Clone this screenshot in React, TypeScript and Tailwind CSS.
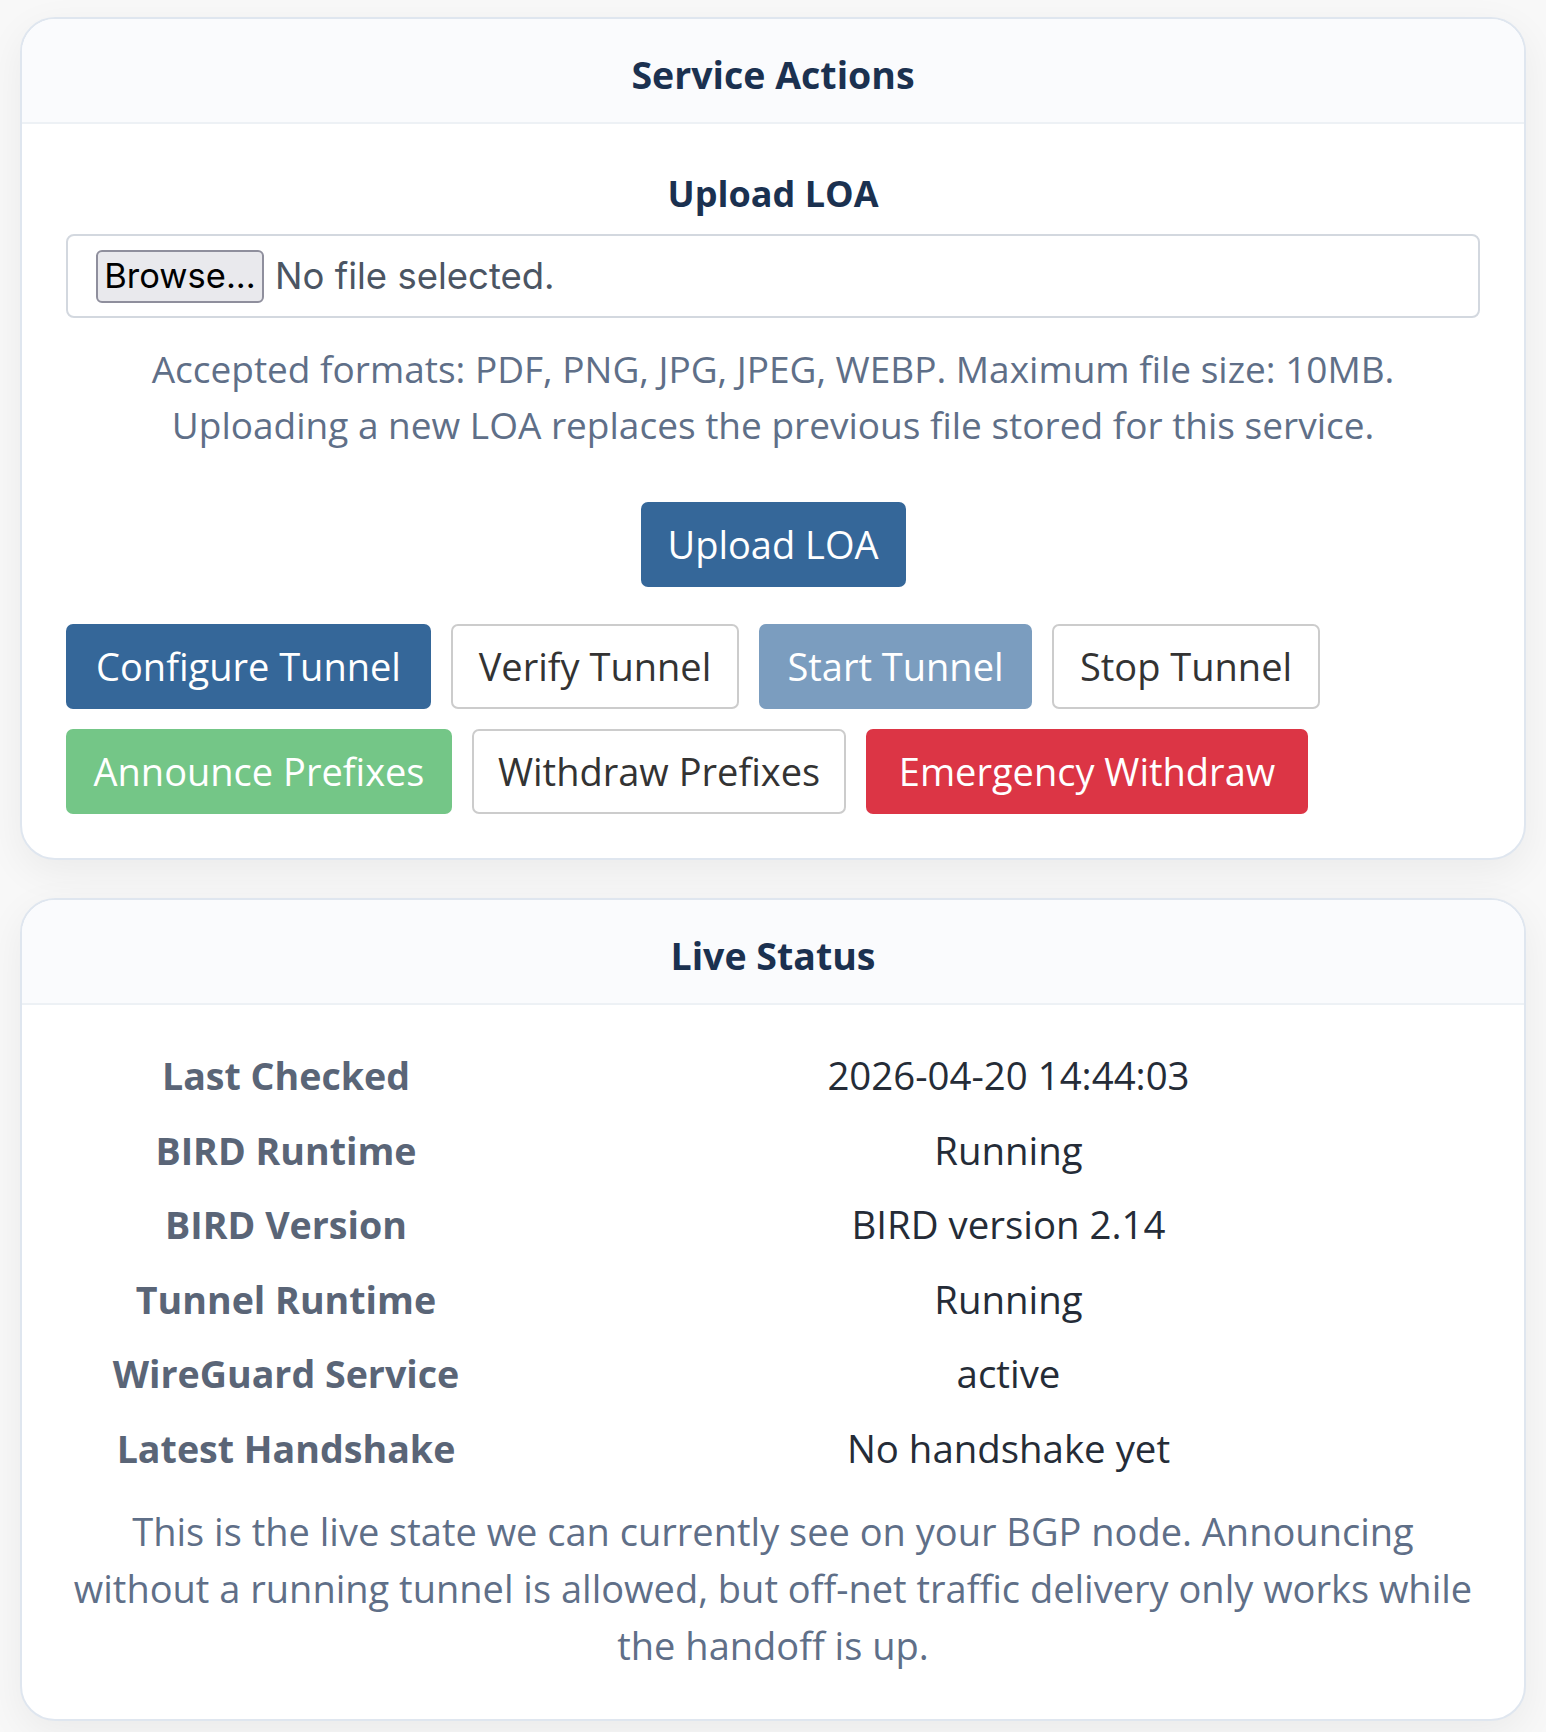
import React from "react";

type Btn = {
    label: string;
    width: string;
    tone: "primary" | "muted" | "outline" | "success" | "danger";
};

const actions: Btn[] = [
    { label: "Configure Tunnel", width: "w-[365px]", tone: "primary" },
    { label: "Verify Tunnel", width: "w-[288px]", tone: "outline" },
    { label: "Start Tunnel", width: "w-[273px]", tone: "muted" },
    { label: "Stop Tunnel", width: "w-[268px]", tone: "outline" },
    { label: "Announce Prefixes", width: "w-[386px]", tone: "success" },
    { label: "Withdraw Prefixes", width: "w-[374px]", tone: "outline" },
    { label: "Emergency Withdraw", width: "w-[442px]", tone: "danger" },
];

const toneClass: Record<Btn["tone"], string> = {
    primary: "bg-[#356799] text-white",
    muted: "bg-[#7b9dbf] text-white",
    outline: "bg-white text-[#333333] border-2 border-[#cccccc]",
    success: "bg-[#74c687] text-white",
    danger: "bg-[#dc3545] text-white",
};

const status = [
    ["Last Checked", "2026-04-20 14:44:03"],
    ["BIRD Runtime", "Running"],
    ["BIRD Version", "BIRD version 2.14"],
    ["Tunnel Runtime", "Running"],
    ["WireGuard Service", "active"],
    ["Latest Handshake", "No handshake yet"],
];

const Card: React.FC<{ title: string; children: React.ReactNode }> = ({ title, children }) => (
    <section className="rounded-[35px] border-2 border-[#dfe6ef] bg-white shadow-[0_12px_40px_rgba(0,0,0,0.06)] overflow-hidden">
        <header className="h-[105px] flex items-center justify-center pt-[8px] bg-[#fafbfd] border-b-2 border-[#edf1f5]">
            <h2 className="text-[37.5px] font-bold text-[#1b3150] leading-none">{title}</h2>
        </header>
        {children}
    </section>
);

export default function App() {
    return (
        <div className="min-h-screen bg-[#f8f8f8] pt-[17px] pb-[13px] px-[20px] font-['Open_Sans','Noto_Sans',sans-serif]">
            <Card title="Service Actions">
                <div className="px-[44px] pt-[48px] pb-[44px]">
                    <h3 className="text-[36px] font-bold text-[#1b3150] leading-[43px] text-center">Upload LOA</h3>

                    {/* file input, drawn by hand */}
                    <div className="mt-[19px] h-[84px] flex items-center pl-[28px] border-2 border-[#d3d8df] rounded-[8px] bg-white font-['Inter',sans-serif]">
                        <span className="h-[53px] w-[168px] flex items-center justify-center rounded-[6px] border-2 border-[#8f8f9d] bg-[#e9e9ed] text-[34.5px] text-black">
                            Browse...
                        </span>
                        <span className="ml-[11px] text-[36.5px] text-[#4b5563]">No file selected.</span>
                    </div>

                    <p className="mt-[23px] text-center text-[37px] leading-[56px] text-[#5f6f88]">
                        Accepted formats: PDF, PNG, JPG, JPEG, WEBP. Maximum file size: 10MB.
                        <br />
                        Uploading a new LOA replaces the previous file stored for this service.
                    </p>

                    <div className="mt-[49px] flex justify-center">
                        <button className="w-[265px] h-[85px] rounded-[7px] bg-[#356799] text-white text-[38px]">
                            Upload LOA
                        </button>
                    </div>

                    <div className="mt-[37px] flex flex-wrap gap-[20px]">
                        {actions.map((a) => (
                            <button
                                key={a.label}
                                className={`${a.width} h-[85px] rounded-[7px] text-[38px] flex items-center justify-center ${toneClass[a.tone]}`}
                            >
                                {a.label}
                            </button>
                        ))}
                    </div>
                </div>
            </Card>

            <div className="mt-[38px]">
                <Card title="Live Status">
                    <div className="px-[44px] pt-[34px] pb-[45px]">
                        <div className="grid grid-cols-[440px_1fr]">
                            {status.map(([k, v]) => (
                                <React.Fragment key={k}>
                                    <div className="h-[74.5px] flex items-center justify-center text-[37.6px] font-bold text-[#5a6577]">
                                        {k}
                                    </div>
                                    <div className="h-[74.5px] flex items-center justify-center pl-[31px] text-[38.4px] text-[#252c37]">
                                        {v}
                                    </div>
                                </React.Fragment>
                            ))}
                        </div>
                        <p className="mt-[17px] text-center text-[38px] leading-[57px] text-[#5f6f88]">
                            This is the live state we can currently see on your BGP node. Announcing
                            <br />
                            without a running tunnel is allowed, but off-net traffic delivery only works while
                            <br />
                            the handoff is up.
                        </p>
                    </div>
                </Card>
            </div>
        </div>
    );
}
